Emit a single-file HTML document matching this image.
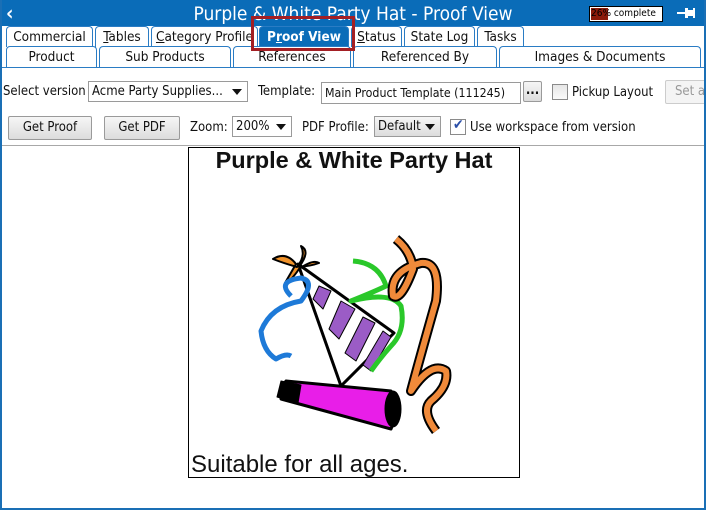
<!DOCTYPE html>
<html><head><meta charset="utf-8"><style>
*{box-sizing:border-box;margin:0;padding:0}
body{width:706px;height:510px;overflow:hidden;background:#fff;font-family:"DejaVu Sans Condensed","Liberation Sans",sans-serif;font-size:13px;color:#111;position:relative}
.abs{position:absolute}
.frame{left:0;top:0;width:706px;height:510px;border:2px solid #1a6fb5;border-top:none}
.title{left:0;top:0;width:706px;height:26px;background:#0a6cb8;color:#fff;font-size:19px;text-align:center;line-height:28px}
.tab{position:absolute;height:21px;border:1px solid #2a7cc4;border-bottom:none;border-radius:4px 4px 0 0;background:#fff;text-align:center;line-height:21px;font-size:13.5px;color:#111}
.row1{top:26px}.row2{top:46px}
.btn{position:absolute;height:24px;border:1px solid #9a9a9a;border-radius:2px;background:linear-gradient(#f6f6f6,#dcdcdc);text-align:center;line-height:22px;font-size:13px}
.sel{position:absolute;height:21px;border:1px solid #9a9a9a;background:#fff;line-height:19px;padding-left:3px;font-size:13px;overflow:hidden;white-space:nowrap}
.dd:after{content:"";position:absolute;right:5px;top:7px;border:5px solid transparent;border-top:6px solid #111}
.lbl{position:absolute;font-size:13px;line-height:16px}
.cb{position:absolute;width:16px;height:16px;border:1px solid #8a8a8a;background:linear-gradient(#e6e6e6,#fafafa)}
</style></head><body>
<div class="abs title">Purple &amp; White Party Hat - Proof View</div>
<div class="abs" style="left:6px;top:3px;color:#fff;font-size:20px;font-weight:bold;line-height:20px">&#x2039;</div>
<div class="abs" style="left:589px;top:6px;width:74px;height:16px;background:#fff;border:1px solid #000"><span style="position:absolute;left:1px;top:1px;background:#8b1a0a;width:17px;height:12px"></span></div>
<div class="abs" style="left:591px;top:7px;font-size:10px;color:#000;line-height:14px">26% complete</div>
<div class="abs" style="left:677px;top:12px;width:9px;height:2px;background:#fff"></div>
<div class="abs" style="left:685px;top:8px;width:3px;height:10px;background:#fff"></div>
<div class="abs" style="left:688px;top:10px;width:5px;height:6px;background:#fff"></div>
<div class="abs" style="left:693px;top:8px;width:2px;height:10px;background:#fff"></div>

<div class="tab row1" style="left:6px;width:87px">Commercial</div>
<div class="tab row1" style="left:95px;width:54px"><u>T</u>ables</div>
<div class="tab row1" style="left:151px;width:107px"><u>C</u>ategory Profile</div>
<div class="tab row1" style="left:259px;width:90px;background:#0a6cb8;color:#fff;font-weight:bold">P<u>r</u>oof View</div>
<div class="tab row1" style="left:351px;width:51px"><u>S</u>tatus</div>
<div class="tab row1" style="left:404px;width:71px">State Log</div>
<div class="tab row1" style="left:477px;width:47px">Tasks</div>
<div class="tab row2" style="left:6px;width:91px">Product</div>
<div class="tab row2" style="left:99px;width:132px">Sub Products</div>
<div class="tab row2" style="left:233px;width:118px">References</div>
<div class="tab row2" style="left:353px;width:144px">Referenced By</div>
<div class="tab row2" style="left:499px;width:202px">Images &amp; Documents</div>
<div class="abs" style="left:2px;top:67px;width:702px;height:1px;background:#2a7cc4"></div>
<div class="abs" style="left:251px;top:16px;width:104px;height:35px;border:3px solid #a31f24"></div>

<div class="lbl" style="left:3px;top:84px">Select version</div>
<div class="sel dd" style="left:88px;top:81px;width:160px">Acme Party Supplies...</div>
<div class="lbl" style="left:258px;top:84px">Template:</div>
<div class="sel" style="left:321px;top:82px;width:200px;height:22px;font-size:12.3px;line-height:20px">Main Product Template (111245)</div>
<div class="btn" style="left:523px;top:81px;width:19px;height:21px;line-height:17px;font-weight:bold">...</div>
<div class="cb" style="left:552px;top:84px"></div>
<div class="lbl" style="left:572px;top:85px">Pickup Layout</div>
<div class="btn" style="left:665px;top:80px;width:50px;color:#999;background:#f4f4f4;border-color:#ccc">Set a</div>

<div class="btn" style="left:8px;top:116px;width:84px">Get Proof</div>
<div class="btn" style="left:104px;top:116px;width:76px">Get PDF</div>
<div class="lbl" style="left:190px;top:120px">Zoom:</div>
<div class="sel dd" style="left:232px;top:116px;width:60px">200%</div>
<div class="lbl" style="left:302px;top:120px">PDF Profile:</div>
<div class="sel dd" style="left:374px;top:116px;width:67px;background:linear-gradient(#f6f6f6,#dcdcdc)">Default</div>
<div class="cb" style="left:450px;top:119px;background:#fff"><span style="position:absolute;left:2px;top:-3px;color:#2b4fa8;font-size:14px">&#x2714;</span></div>
<div class="lbl" style="left:470px;top:120px">Use workspace from version</div>

<div class="abs" style="left:2px;top:145px;width:702px;height:1px;background:#a8a8a8"></div>
<div class="abs" style="left:188px;top:147px;width:332px;height:331px;border:1px solid #000;background:#fff">
<div style="text-align:center;font-family:'Liberation Sans',sans-serif;font-weight:bold;font-size:23.5px;line-height:24px;margin-top:0">Purple &amp; White Party Hat</div>
<div style="position:absolute;left:2px;top:303px;font-family:'Liberation Sans',sans-serif;font-size:24px">Suitable for all ages.</div>
<svg style="position:absolute;left:0;top:0" width="332" height="331" viewBox="188 147 332 331">
<g stroke="#000" stroke-linejoin="round">
<path d="M297,263 L393,332 L340,385 Z" fill="#fff" stroke-width="3"/>
<path d="M318,285 L330,290 L322,308 L312,298Z M340,300 L354,308 L338,338 L328,328Z M362,316 L374,322 L355,360 L344,352Z M382,330 L390,336 L370,370 L362,364Z" fill="#9b5cc6" stroke-width="1"/>
<path d="M295,263 Q285,250 272,258 Q282,262 296,266 Q305,255 300,245 Q310,250 298,266 Q310,265 318,262 Q312,258 298,268 Q290,280 284,282 Z" fill="#f0922a" stroke-width="2"/>
<path d="M290,295 Q275,280 300,277 Q315,280 300,300 Q270,305 260,330 Q262,350 275,358 Q285,352 290,355" fill="none" stroke="#1e7ad8" stroke-width="5"/>
<path d="M352,260 Q378,262 385,285 Q375,290 350,300 Q390,290 400,305 Q405,330 390,345 Q380,356 370,370" fill="none" stroke="#2ac82a" stroke-width="5"/>
<path d="M395,238 Q410,250 412,268 Q400,300 392,295 Q388,270 420,262 Q440,260 435,300 Q418,360 410,390 Q430,360 445,370 Q448,385 430,400 Q420,410 435,430" fill="none" stroke="#000" stroke-width="10"/>
<path d="M395,238 Q410,250 412,268 Q400,300 392,295 Q388,270 420,262 Q440,260 435,300 Q418,360 410,390 Q430,360 445,370 Q448,385 430,400 Q420,410 435,430" fill="none" stroke="#f08a3a" stroke-width="6"/>
<path d="M280,387 L285,380 L390,390 Q400,405 390,428 L280,398 Z" fill="#e81ee8" stroke-width="3"/>
<ellipse cx="392" cy="408" rx="8" ry="18" fill="#000"/>
<path d="M280,380 L300,384 L297,402 L276,396Z" fill="#000"/>
</g>
</svg>
</div>
<div class="abs frame"></div>
</body></html>
